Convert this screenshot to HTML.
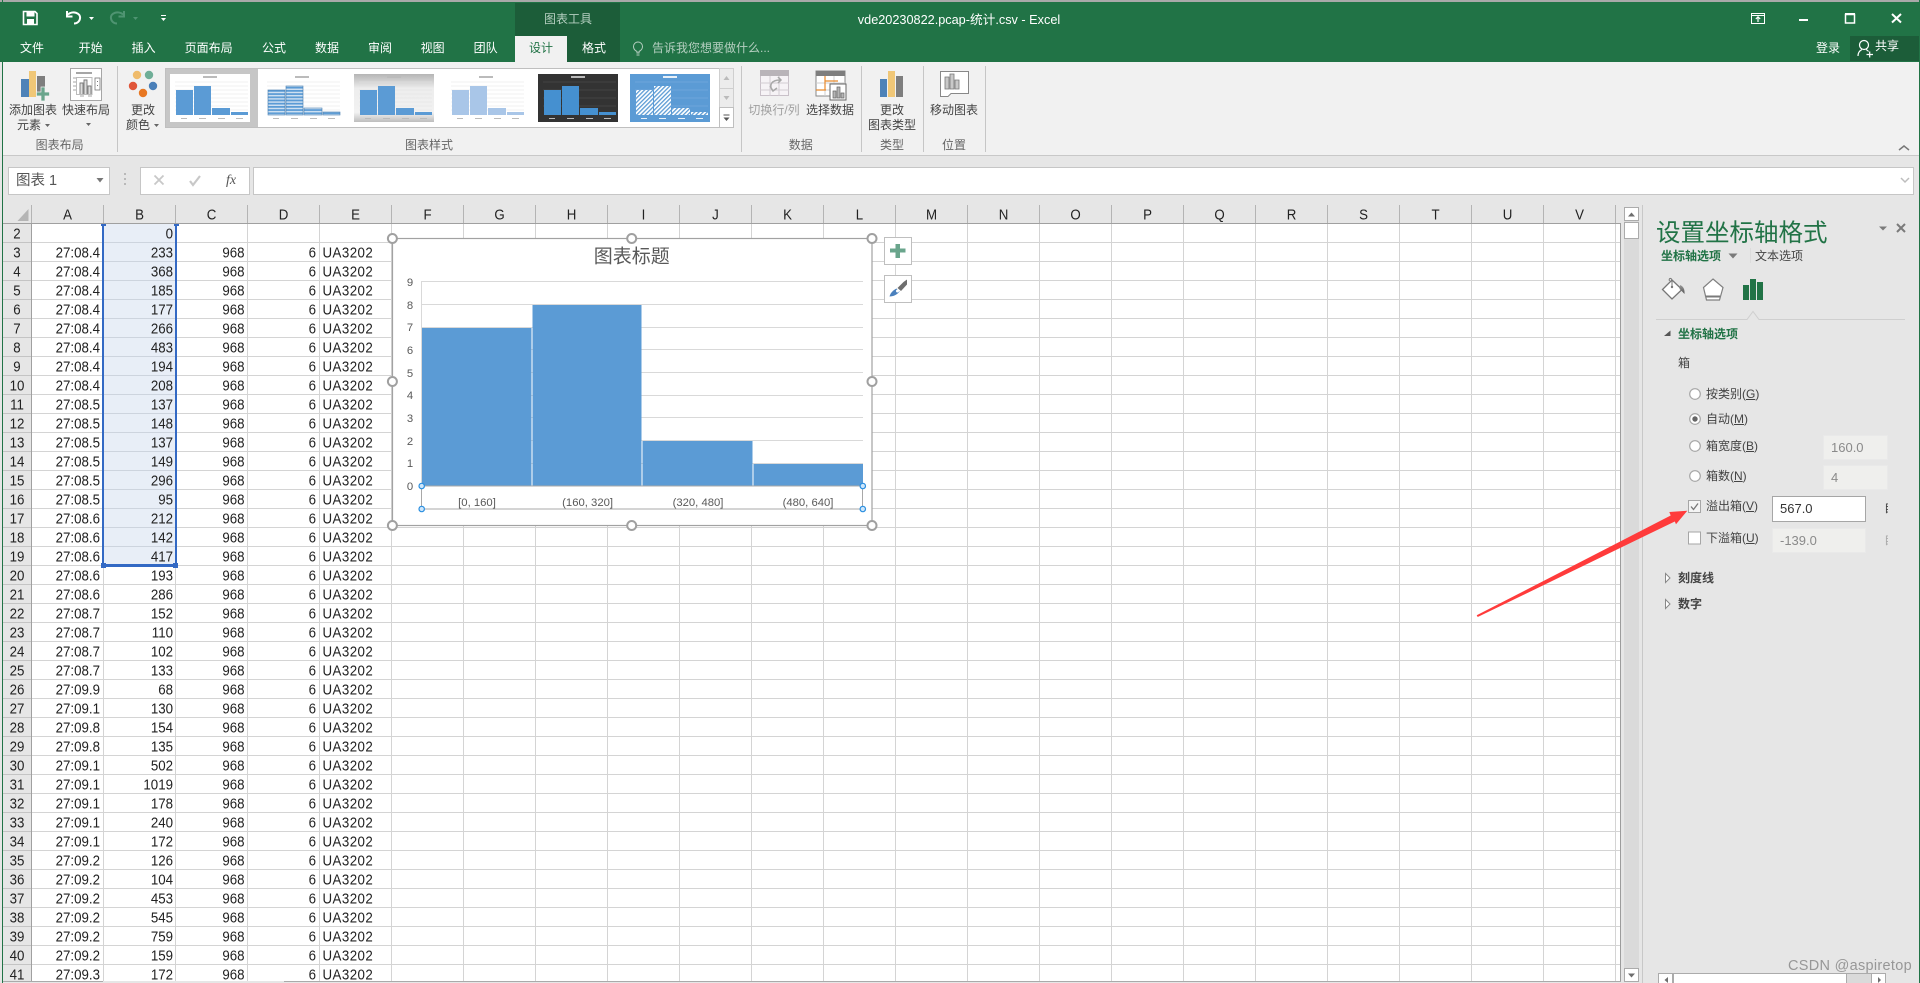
<!DOCTYPE html>
<html lang="zh-CN"><head><meta charset="utf-8"><title>vde20230822.pcap-统计.csv - Excel</title>
<style>
html,body{margin:0;padding:0;width:1920px;height:983px;overflow:hidden;background:#e6e6e6}
body{position:relative;font-family:"Liberation Sans","Noto Sans CJK SC","WenQuanYi Zen Hei",sans-serif;font-size:12px;color:#444}
div,span{box-sizing:border-box}
.a{position:absolute}
.t{position:absolute;white-space:nowrap;line-height:16px}
.c{transform:translateX(-50%)}
.w{color:#fff}
.g{color:#666}
.hd{position:absolute;top:205px;height:18px;width:72px;text-align:center;line-height:19px;font-size:13.3px;color:#222;border-right:1px solid #b4b4b4;transform-origin:top}
.hd span{display:inline-block;transform:scaleY(1.12)}
#rows{position:absolute;left:0;top:224px;width:400px;height:757px;overflow:hidden;font-size:13.3px;color:#222}
.r{position:relative;height:19px;line-height:18px}
.r span{position:absolute;top:1px;transform:scaleY(1.12);white-space:nowrap}
.r .h{left:3px;width:28px;text-align:center}
.r .x1{left:32px;width:68px;text-align:right}
.r .x2{left:104px;width:69px;text-align:right}
.r .x3{left:176px;width:68.5px;text-align:right}
.r .x4{left:248px;width:68px;text-align:right}
.r .x5{left:322.5px;letter-spacing:.45px}
.in{position:absolute;background:#efefed;border:1px solid #e9e9e9;color:#8a8a8a;font-size:13px;line-height:23px;padding-left:7px}
.u{text-decoration:underline;text-underline-offset:1px}
</style></head><body>

<!-- window frame -->
<div class="a" style="left:0;top:0;width:1920px;height:2px;background:#a9a9a9"></div>
<div class="a" style="left:2px;top:0;width:1px;height:983px;background:#217346"></div>
<div class="a" style="left:1919px;top:0;width:1px;height:983px;background:#217346"></div>

<!-- title bar -->
<div class="a" style="left:0;top:2px;width:1920px;height:60px;background:#217346"></div>
<div class="a" style="left:515px;top:3px;width:105px;height:59px;background:#1c5d39"></div>
<div class="a" style="left:515px;top:36px;width:52px;height:26px;background:#f1f1f1"></div>
<div class="a" style="left:1850px;top:36px;width:69px;height:25px;background:#1c5d39"></div>

<span class="t c" style="left:568px;top:11px;color:#b5cfc0">图表工具</span>
<span class="t c w" style="left:959px;top:12px;font-size:12.7px">vde20230822.pcap-统计.csv - Excel</span>

<span class="t c w" style="left:32px;top:40px">文件</span>
<span class="t c w" style="left:90.6px;top:40px">开始</span>
<span class="t c w" style="left:143.7px;top:40px">插入</span>
<span class="t c w" style="left:208.6px;top:40px">页面布局</span>
<span class="t c w" style="left:274px;top:40px">公式</span>
<span class="t c w" style="left:327px;top:40px">数据</span>
<span class="t c w" style="left:380px;top:40px">审阅</span>
<span class="t c w" style="left:432.7px;top:40px">视图</span>
<span class="t c w" style="left:485.7px;top:40px">团队</span>
<span class="t c" style="left:541px;top:40px;color:#217346">设计</span>
<span class="t c w" style="left:594px;top:40px">格式</span>
<span class="t" style="left:652px;top:40px;color:#b5cfc0">告诉我您想要做什么...</span>
<span class="t c w" style="left:1828px;top:40px">登录</span>
<span class="t w" style="left:1875px;top:38px">共享</span>

<!-- ribbon -->
<div class="a" style="left:3px;top:62px;width:1916px;height:94px;background:#f1f1f1;border-bottom:1px solid #c8c8c8"></div>

<span class="t c" style="left:33px;top:102px">添加图表</span>
<span class="t c" style="left:29px;top:117px">元素</span>
<span class="t c" style="left:86px;top:102px">快速布局</span>
<span class="t c" style="left:143px;top:102px">更改</span>
<span class="t c" style="left:138px;top:117px">颜色</span>
<span class="t c" style="left:774px;top:102px;color:#a0a0a0">切换行/列</span>
<span class="t c" style="left:830px;top:102px">选择数据</span>
<span class="t c" style="left:892px;top:102px">更改</span>
<span class="t c" style="left:892px;top:117px">图表类型</span>
<span class="t c" style="left:954px;top:102px">移动图表</span>
<span class="t c g" style="left:59.6px;top:137px">图表布局</span>
<span class="t c g" style="left:429px;top:137px">图表样式</span>
<span class="t c g" style="left:800.8px;top:137px">数据</span>
<span class="t c g" style="left:892px;top:137px">类型</span>
<span class="t c g" style="left:954px;top:137px">位置</span>

<!-- formula bar -->
<div class="a" style="left:8px;top:167px;width:102px;height:28px;background:#fff;border:1px solid #c6c6c6"></div>
<div class="a" style="left:140px;top:167px;width:110px;height:28px;background:#fff;border:1px solid #c6c6c6"></div>
<div class="a" style="left:253px;top:167px;width:1661px;height:28px;background:#fff;border:1px solid #c6c6c6"></div>
<span class="t" style="left:16px;top:173px;font-size:14.5px;color:#555">图表 1</span>
<span class="t c" style="left:231px;top:173px;font-family:'Liberation Serif',serif;font-style:italic;font-size:14px;color:#555">fx</span>

<!-- column headers -->
<div class="a" style="left:3px;top:205px;width:1617px;height:19px;background:#e6e6e6;border-bottom:1px solid #a0a0a0"></div>
<div class="a" style="left:31px;top:205px;width:1px;height:18px;background:#b4b4b4"></div>
<div class="hd" style="left:32px"><span>A</span></div><div class="hd" style="left:104px"><span>B</span></div><div class="hd" style="left:176px"><span>C</span></div><div class="hd" style="left:248px"><span>D</span></div><div class="hd" style="left:320px"><span>E</span></div><div class="hd" style="left:392px"><span>F</span></div><div class="hd" style="left:464px"><span>G</span></div><div class="hd" style="left:536px"><span>H</span></div><div class="hd" style="left:608px"><span>I</span></div><div class="hd" style="left:680px"><span>J</span></div><div class="hd" style="left:752px"><span>K</span></div><div class="hd" style="left:824px"><span>L</span></div><div class="hd" style="left:896px"><span>M</span></div><div class="hd" style="left:968px"><span>N</span></div><div class="hd" style="left:1040px"><span>O</span></div><div class="hd" style="left:1112px"><span>P</span></div><div class="hd" style="left:1184px"><span>Q</span></div><div class="hd" style="left:1256px"><span>R</span></div><div class="hd" style="left:1328px"><span>S</span></div><div class="hd" style="left:1400px"><span>T</span></div><div class="hd" style="left:1472px"><span>U</span></div><div class="hd" style="left:1544px"><span>V</span></div>

<!-- row header + grid -->
<div class="a" style="left:3px;top:224px;width:29px;height:757px;background-color:#e6e6e6;background-image:linear-gradient(to bottom,transparent 18px,#c4c4c4 18px);background-size:100% 19px;border-right:1px solid #a0a0a0"></div>
<div class="a" style="left:32px;top:224px;width:1588px;height:757px;background-color:#fff;background-image:linear-gradient(to right,transparent 71px,#d4d4d4 71px),linear-gradient(to bottom,transparent 18px,#d4d4d4 18px);background-size:72px 19px"></div>
<div class="a" style="left:1620px;top:223px;width:1px;height:758px;background:#9c9c9c"></div>
<!-- selection -->
<div class="a" style="left:104px;top:224px;width:71px;height:341px;background-color:#e8eef7;background-image:linear-gradient(to bottom,transparent 18px,#cdd4de 18px);background-size:100% 19px"></div>
<div class="a" style="left:102px;top:226px;width:2px;height:339px;background:#3369c4"></div>
<div class="a" style="left:175px;top:226px;width:2px;height:339px;background:#3369c4"></div>
<div class="a" style="left:102px;top:564px;width:75px;height:3px;background:#3369c4"></div>
<div class="a" style="left:101px;top:224px;width:5px;height:2px;background:#3369c4"></div>
<div class="a" style="left:174px;top:224px;width:5px;height:2px;background:#3369c4"></div>
<div class="a" style="left:101px;top:563px;width:5px;height:5px;background:#3369c4"></div>
<div class="a" style="left:173px;top:563px;width:5px;height:5px;background:#3369c4"></div>

<div id="rows">
<div class="r"><span class="h">2</span><span class="x2">0</span></div>
<div class="r"><span class="h">3</span><span class="x1">27:08.4</span><span class="x2">233</span><span class="x3">968</span><span class="x4">6</span><span class="x5">UA3202</span></div>
<div class="r"><span class="h">4</span><span class="x1">27:08.4</span><span class="x2">368</span><span class="x3">968</span><span class="x4">6</span><span class="x5">UA3202</span></div>
<div class="r"><span class="h">5</span><span class="x1">27:08.4</span><span class="x2">185</span><span class="x3">968</span><span class="x4">6</span><span class="x5">UA3202</span></div>
<div class="r"><span class="h">6</span><span class="x1">27:08.4</span><span class="x2">177</span><span class="x3">968</span><span class="x4">6</span><span class="x5">UA3202</span></div>
<div class="r"><span class="h">7</span><span class="x1">27:08.4</span><span class="x2">266</span><span class="x3">968</span><span class="x4">6</span><span class="x5">UA3202</span></div>
<div class="r"><span class="h">8</span><span class="x1">27:08.4</span><span class="x2">483</span><span class="x3">968</span><span class="x4">6</span><span class="x5">UA3202</span></div>
<div class="r"><span class="h">9</span><span class="x1">27:08.4</span><span class="x2">194</span><span class="x3">968</span><span class="x4">6</span><span class="x5">UA3202</span></div>
<div class="r"><span class="h">10</span><span class="x1">27:08.4</span><span class="x2">208</span><span class="x3">968</span><span class="x4">6</span><span class="x5">UA3202</span></div>
<div class="r"><span class="h">11</span><span class="x1">27:08.5</span><span class="x2">137</span><span class="x3">968</span><span class="x4">6</span><span class="x5">UA3202</span></div>
<div class="r"><span class="h">12</span><span class="x1">27:08.5</span><span class="x2">148</span><span class="x3">968</span><span class="x4">6</span><span class="x5">UA3202</span></div>
<div class="r"><span class="h">13</span><span class="x1">27:08.5</span><span class="x2">137</span><span class="x3">968</span><span class="x4">6</span><span class="x5">UA3202</span></div>
<div class="r"><span class="h">14</span><span class="x1">27:08.5</span><span class="x2">149</span><span class="x3">968</span><span class="x4">6</span><span class="x5">UA3202</span></div>
<div class="r"><span class="h">15</span><span class="x1">27:08.5</span><span class="x2">296</span><span class="x3">968</span><span class="x4">6</span><span class="x5">UA3202</span></div>
<div class="r"><span class="h">16</span><span class="x1">27:08.5</span><span class="x2">95</span><span class="x3">968</span><span class="x4">6</span><span class="x5">UA3202</span></div>
<div class="r"><span class="h">17</span><span class="x1">27:08.6</span><span class="x2">212</span><span class="x3">968</span><span class="x4">6</span><span class="x5">UA3202</span></div>
<div class="r"><span class="h">18</span><span class="x1">27:08.6</span><span class="x2">142</span><span class="x3">968</span><span class="x4">6</span><span class="x5">UA3202</span></div>
<div class="r"><span class="h">19</span><span class="x1">27:08.6</span><span class="x2">417</span><span class="x3">968</span><span class="x4">6</span><span class="x5">UA3202</span></div>
<div class="r"><span class="h">20</span><span class="x1">27:08.6</span><span class="x2">193</span><span class="x3">968</span><span class="x4">6</span><span class="x5">UA3202</span></div>
<div class="r"><span class="h">21</span><span class="x1">27:08.6</span><span class="x2">286</span><span class="x3">968</span><span class="x4">6</span><span class="x5">UA3202</span></div>
<div class="r"><span class="h">22</span><span class="x1">27:08.7</span><span class="x2">152</span><span class="x3">968</span><span class="x4">6</span><span class="x5">UA3202</span></div>
<div class="r"><span class="h">23</span><span class="x1">27:08.7</span><span class="x2">110</span><span class="x3">968</span><span class="x4">6</span><span class="x5">UA3202</span></div>
<div class="r"><span class="h">24</span><span class="x1">27:08.7</span><span class="x2">102</span><span class="x3">968</span><span class="x4">6</span><span class="x5">UA3202</span></div>
<div class="r"><span class="h">25</span><span class="x1">27:08.7</span><span class="x2">133</span><span class="x3">968</span><span class="x4">6</span><span class="x5">UA3202</span></div>
<div class="r"><span class="h">26</span><span class="x1">27:09.9</span><span class="x2">68</span><span class="x3">968</span><span class="x4">6</span><span class="x5">UA3202</span></div>
<div class="r"><span class="h">27</span><span class="x1">27:09.1</span><span class="x2">130</span><span class="x3">968</span><span class="x4">6</span><span class="x5">UA3202</span></div>
<div class="r"><span class="h">28</span><span class="x1">27:09.8</span><span class="x2">154</span><span class="x3">968</span><span class="x4">6</span><span class="x5">UA3202</span></div>
<div class="r"><span class="h">29</span><span class="x1">27:09.8</span><span class="x2">135</span><span class="x3">968</span><span class="x4">6</span><span class="x5">UA3202</span></div>
<div class="r"><span class="h">30</span><span class="x1">27:09.1</span><span class="x2">502</span><span class="x3">968</span><span class="x4">6</span><span class="x5">UA3202</span></div>
<div class="r"><span class="h">31</span><span class="x1">27:09.1</span><span class="x2">1019</span><span class="x3">968</span><span class="x4">6</span><span class="x5">UA3202</span></div>
<div class="r"><span class="h">32</span><span class="x1">27:09.1</span><span class="x2">178</span><span class="x3">968</span><span class="x4">6</span><span class="x5">UA3202</span></div>
<div class="r"><span class="h">33</span><span class="x1">27:09.1</span><span class="x2">240</span><span class="x3">968</span><span class="x4">6</span><span class="x5">UA3202</span></div>
<div class="r"><span class="h">34</span><span class="x1">27:09.1</span><span class="x2">172</span><span class="x3">968</span><span class="x4">6</span><span class="x5">UA3202</span></div>
<div class="r"><span class="h">35</span><span class="x1">27:09.2</span><span class="x2">126</span><span class="x3">968</span><span class="x4">6</span><span class="x5">UA3202</span></div>
<div class="r"><span class="h">36</span><span class="x1">27:09.2</span><span class="x2">104</span><span class="x3">968</span><span class="x4">6</span><span class="x5">UA3202</span></div>
<div class="r"><span class="h">37</span><span class="x1">27:09.2</span><span class="x2">453</span><span class="x3">968</span><span class="x4">6</span><span class="x5">UA3202</span></div>
<div class="r"><span class="h">38</span><span class="x1">27:09.2</span><span class="x2">545</span><span class="x3">968</span><span class="x4">6</span><span class="x5">UA3202</span></div>
<div class="r"><span class="h">39</span><span class="x1">27:09.2</span><span class="x2">759</span><span class="x3">968</span><span class="x4">6</span><span class="x5">UA3202</span></div>
<div class="r"><span class="h">40</span><span class="x1">27:09.2</span><span class="x2">159</span><span class="x3">968</span><span class="x4">6</span><span class="x5">UA3202</span></div>
<div class="r"><span class="h">41</span><span class="x1">27:09.3</span><span class="x2">172</span><span class="x3">968</span><span class="x4">6</span><span class="x5">UA3202</span></div>
</div>
<div class="a" style="left:3px;top:981px;width:100px;height:2px;background:#e6e6e6;border-top:1px solid #aaa"></div>
<div class="a" style="left:284px;top:981px;width:1337px;height:2px;background:#e6e6e6;border-top:1px solid #aaa"></div>

<!-- scrollbar -->
<div class="a" style="left:1624px;top:207px;width:15px;height:775px;background:#dadada"></div>
<div class="a" style="left:1624px;top:207px;width:15px;height:14px;background:#fff;border:1px solid #ababab"></div>
<div class="a" style="left:1624px;top:222px;width:15px;height:17px;background:#fff;border:1px solid #ababab"></div>
<div class="a" style="left:1624px;top:968px;width:15px;height:14px;background:#fff;border:1px solid #ababab"></div>
<div class="a" style="left:1642px;top:205px;width:1px;height:778px;background:#c8c8c8"></div>

<!-- task pane -->
<span class="t" style="left:1656px;top:220px;font-size:24.5px;line-height:28px;color:#217346">设置坐标轴格式</span>
<span class="t" style="left:1661px;top:248px;font-weight:bold;color:#217346">坐标轴选项</span>
<span class="t" style="left:1755px;top:248px">文本选项</span>
<span class="t" style="left:1678px;top:326px;font-weight:bold;color:#217346">坐标轴选项</span>
<span class="t" style="left:1678px;top:355px">箱</span>
<span class="t" style="left:1706px;top:386px">按类别(<span class="u">G</span>)</span>
<span class="t" style="left:1706px;top:411px">自动(<span class="u">M</span>)</span>
<span class="t" style="left:1706px;top:438px">箱宽度(<span class="u">B</span>)</span>
<span class="t" style="left:1706px;top:468px">箱数(<span class="u">N</span>)</span>
<span class="t" style="left:1706px;top:498px">溢出箱(<span class="u">V</span>)</span>
<span class="t" style="left:1706px;top:530px">下溢箱(<span class="u">U</span>)</span>
<div class="in" style="left:1823px;top:435px;width:65px;height:25px">160.0</div>
<div class="in" style="left:1823px;top:465px;width:65px;height:25px">4</div>
<div class="in" style="left:1772px;top:496px;width:94px;height:26px;background:#fff;border:1px solid #a6a6a6;color:#333">567.0</div>
<div class="in" style="left:1772px;top:528px;width:94px;height:25px">-139.0</div>
<div class="a" style="left:1884px;top:500px;width:4px;height:16px;overflow:hidden;line-height:16px">自动</div>
<div class="a" style="left:1884px;top:532px;width:4px;height:16px;overflow:hidden;line-height:16px;color:#aaa">自动</div>
<span class="t" style="left:1678px;top:570px;font-weight:bold">刻度线</span>
<span class="t" style="left:1678px;top:596px;font-weight:bold">数字</span>
<span class="t" style="left:1788px;top:958px;font-size:14.5px;color:#979797;letter-spacing:.3px">CSDN @aspiretop</span>

<!-- pane bottom scrollbar -->
<div class="a" style="left:1658px;top:973px;width:228px;height:10px;background:#dadada;border-top:1px solid #ababab"></div>
<div class="a" style="left:1658px;top:973px;width:15px;height:10px;background:#fff;border:1px solid #ababab;border-bottom:0"></div>
<div class="a" style="left:1673px;top:973px;width:174px;height:10px;background:#fff;border:1px solid #ababab;border-bottom:0"></div>
<div class="a" style="left:1871px;top:973px;width:15px;height:10px;background:#fff;border:1px solid #ababab;border-bottom:0"></div>

<!-- all graphics overlay -->
<svg class="a" style="left:0;top:0" width="1920" height="983" viewBox="0 0 1920 983" xmlns="http://www.w3.org/2000/svg">
<defs>
<g id="bb"><rect x="6" y="16" width="17" height="25"/><rect x="24" y="12" width="17" height="29"/><rect x="42" y="34" width="18" height="7"/><rect x="61" y="38" width="17" height="3"/></g>
<pattern id="st" width="4" height="3.2" patternUnits="userSpaceOnUse"><rect width="4" height="1.8" fill="#5b9bd5"/><rect y="1.8" width="4" height="1.4" fill="#cfe0f1"/></pattern>
<pattern id="ha" width="3" height="3" patternUnits="userSpaceOnUse" patternTransform="rotate(45)"><rect width="3" height="3" fill="#fff"/><rect width="1.3" height="3" fill="#5b9bd5"/></pattern>
<linearGradient id="gr" x1="0" y1="0" x2="0" y2="1"><stop offset="0" stop-color="#b5b5b5"/><stop offset=".3" stop-color="#ededed"/><stop offset=".8" stop-color="#f2f2f2"/><stop offset="1" stop-color="#bdbdbd"/></linearGradient>
<linearGradient id="bk" x1="0" y1="0" x2="0" y2="1"><stop offset="0" stop-color="#999"/><stop offset="1" stop-color="#555"/></linearGradient>
<g id="gl" stroke="#e2e2e2" stroke-width=".6"><path d="M5 8H78M5 12H78M5 16H78M5 20H78M5 24H78M5 28H78M5 32H78M5 36H78"/></g>
<g id="lb" fill="#bbb"><rect x="11" y="44" width="6" height="1"/><rect x="29" y="44" width="7" height="1"/><rect x="48" y="44" width="7" height="1"/><rect x="66" y="44" width="7" height="1"/><rect x="33" y="2" width="14" height="2"/></g>
</defs>

<!-- QAT -->
<g fill="none" stroke="#fff">
<path d="M23.5 11.5H35L37 13.5V24.5H23.5Z" stroke-width="1.6"/>
<rect x="26.5" y="12" width="8" height="4.5" fill="#fff" stroke="none"/>
<rect x="27" y="19" width="7" height="5.5" fill="#fff" stroke="none"/>
<path d="M68 14.5C72 10.5 81 12.5 80 18.5C79.6 21.5 77 23.5 74 23.5" stroke-width="2"/>
<path d="M67 11V16.5H72.5" stroke-width="2"/>
</g>
<path d="M89 17h5l-2.5 3z" fill="#fff"/>
<g fill="none" stroke="#4f9472" stroke-width="2"><path d="M123 14.5C119 10.5 110 12.5 111 18.5C111.4 21.5 114 23.5 117 23.5"/><path d="M124 11V16.5H118.5"/></g>
<path d="M133 17h5l-2.5 3z" fill="#4f9472"/>
<path d="M161 15h5v1h-5zM161 18h5l-2.5 3z" fill="#fff"/>

<!-- window controls -->
<g fill="none" stroke="#fff" stroke-width="1">
<rect x="1751.5" y="13.5" width="13" height="10"/><path d="M1751.5 15.5h13"/><path d="M1758 22v-5M1755.8 19l2.2-2.2 2.2 2.2" stroke-width="1.2"/>
<rect x="1845.5" y="14.5" width="9" height="8.5" stroke-width="1.5"/><path d="M1845 14h10" stroke-width="2"/>
<path d="M1892 14L1901 22.5M1901 14L1892 22.5" stroke-width="2"/>
</g>
<rect x="1799" y="19" width="9" height="2" fill="#fff"/>
<g fill="none" stroke="#fff" stroke-width="1.2"><circle cx="1864" cy="45" r="4.5"/><path d="M1858 56C1858 52 1860 50.5 1862 49.5M1866 49.5C1867 50 1868 50.5 1868.5 51.5M1866.5 54.5H1873M1869.7 51.5V57.5"/></g>
<!-- tell me bulb -->
<g fill="none" stroke="#b5cfc0" stroke-width="1"><path d="M637 53v-1.5c-2-1-3.5-3-3.5-5a4.5 4.5 0 0 1 9 0c0 2-1.5 4-3.5 5V53zM636.5 55h3"/></g>

<!-- ribbon icons: add chart element -->
<rect x="21" y="79" width="8" height="18" fill="#4d82b8"/><rect x="29" y="71" width="7" height="26" fill="#f0c777"/><rect x="37" y="76" width="8" height="20" fill="#7e7e7e"/>
<path d="M41 87h4v5h4.500v4H45v5h-4v-5H36.500v-4H41z" fill="#6aa58c" stroke="#f1f1f1" stroke-width=".7"/>
<!-- quick layout -->
<rect x="70.500" y="68.500" width="31" height="32" fill="#fff" stroke="#a6a6a6"/>
<rect x="76" y="72" width="16" height="2" fill="#a6a6a6"/>
<path d="M73 78h4M73 82h4M73 86h4M73 90h4M80 96h4M88 96h4" stroke="#a6a6a6" fill="none"/>
<path d="M76.500 77.500H92V94.500H76.500Z" fill="#fff" stroke="#bbb"/>
<path d="M80 94V83h3V94M84 94V80h3V94M88 94V86h3V94" fill="#ddd" stroke="#777" stroke-width=".9"/>
<rect x="95" y="78" width="5" height="12" fill="#fff" stroke="#777" stroke-width=".8"/><path d="M97.500 81v1M97.500 85v1" stroke="#777"/>
<path d="M45 124h5l-2.500 3zM86 123h5l-2.500 3zM154 124h5l-2.500 3z" fill="#666"/>
<!-- change colours -->
<circle cx="137" cy="75" r="4.200" fill="#efbb6b"/><circle cx="149" cy="75" r="4.200" fill="#6fae97"/><circle cx="133" cy="86" r="4.200" fill="#e0563a"/><circle cx="153" cy="86" r="4.200" fill="#4a7fb8"/><circle cx="143" cy="93" r="4.200" fill="#e87722"/>
<!-- separators -->
<path d="M117.500 66V152M741.500 66V152M861.500 66V152M923.500 66V152M985.500 66V152" stroke="#c6c6c6"/>

<!-- gallery -->
<rect x="165.500" y="68.500" width="568" height="59" fill="#fff" stroke="#bfbfbf"/>
<rect x="166" y="69" width="92" height="58" fill="#c6c6c6"/>
<g transform="translate(170 74)"><rect width="80" height="48" fill="#fff"/><use href="#gl"/><use href="#lb"/><use href="#bb" fill="#5b9bd5"/></g>
<g transform="translate(262 74)"><rect width="80" height="48" fill="#fff"/><use href="#gl"/><use href="#lb"/><use href="#bb" fill="url(#st)" stroke="#4a7fb0" stroke-width=".6"/></g>
<g transform="translate(354 74)"><rect width="80" height="48" fill="url(#gr)"/><use href="#gl"/><use href="#lb"/><use href="#bb" fill="#5b9bd5"/></g>
<g transform="translate(446 74)"><rect width="80" height="48" fill="#fff"/><use href="#gl"/><use href="#lb"/><use href="#bb" fill="#a9c6e8"/></g>
<g transform="translate(538 74)"><rect width="80" height="48" fill="#333"/><path d="M5 8H78M5 16H78M5 24H78M5 32H78" stroke="#555" stroke-width=".6"/><use href="#lb"/><use href="#bb" fill="#4590d0"/></g>
<g transform="translate(630 74)"><rect width="80" height="48" fill="#5b9bd5"/><path d="M5 8H78M5 16H78M5 24H78M5 32H78" stroke="#7fb2e0" stroke-width=".6"/><g fill="#e8f0f8"><rect x="33" y="2" width="14" height="2"/><rect x="11" y="44" width="6" height="1"/><rect x="29" y="44" width="7" height="1"/><rect x="48" y="44" width="7" height="1"/><rect x="66" y="44" width="7" height="1"/></g><use href="#bb" fill="url(#ha)"/></g>
<rect x="719.500" y="68.500" width="14" height="20" fill="#ececec" stroke="#cfcfcf"/><rect x="719.500" y="88.500" width="14" height="19" fill="#ececec" stroke="#cfcfcf"/><rect x="719.500" y="107.500" width="14" height="20" fill="#fff" stroke="#bfbfbf"/>
<path d="M723.500 80l3-4 3 4zM723.500 96l3 4 3-4z" fill="#bbb"/><path d="M723.500 114.500h6v1h-6zM723.500 117.500h6l-3 3.500z" fill="#555"/>

<!-- switch row/col -->
<rect x="760.500" y="70.500" width="28" height="25" fill="#f6f3f6" stroke="#c9c1c9"/><rect x="760" y="70" width="29" height="6" fill="#b9b4b9"/>
<path d="M770 76V96M779 76V96M760 83H789M760 90H789" stroke="#d3ccd3"/>
<path d="M773 91C768 85 772 80 780 80M770 86l3 5 4-3M778 77l3 3-3 3" fill="none" stroke="#a8a8a8" stroke-width="1.500"/>
<!-- select data -->
<rect x="816" y="71" width="29" height="25" fill="#fff" stroke="#888"/><rect x="816" y="71" width="29" height="5" fill="#7e7e7e"/>
<path d="M816 83H845M816 90H845M825 76V96M834 76V96" stroke="#cfcfcf"/>
<path d="M825 76V90M825 81H838M816 90H826" stroke="#e88a2c" stroke-width="1.200" fill="none"/>
<rect x="830" y="84" width="16" height="16" fill="#fff" stroke="#666"/><path d="M833 98V91h3V98zM837 98V87h3V98zM841 98V93h3V98z" fill="#b5b5b5" stroke="#666" stroke-width=".7"/>
<!-- change type -->
<rect x="880" y="79" width="7" height="18" fill="#4d82b8"/><rect x="888" y="71" width="7" height="26" fill="#f0c777"/><rect x="896" y="76" width="7" height="21" fill="#7e7e7e"/>
<!-- move chart -->
<path d="M940.500 71.500H968.500V93.500H951L948 96.500H940.500Z" fill="#fff" stroke="#888"/>
<path d="M945 89V77h4V89zM950 89V74h4V89zM955 89V80h4V89z" fill="#c9c9c9" stroke="#777" stroke-width=".8"/>
<path d="M1899 150l5-4 5 4" fill="none" stroke="#777" stroke-width="1.500"/>

<!-- formula bar icons -->
<path d="M96.500 178h7l-3.500 4.500z" fill="#777"/>
<path d="M125 173v2M125 178v2M125 183v2" stroke="#aaa" stroke-width="1.500"/>
<path d="M154.500 175.500l9 9M163.500 175.500l-9 9" stroke="#c8c8c8" stroke-width="1.800"/>
<path d="M190 181l3 4 7-9" stroke="#c8c8c8" stroke-width="2.200" fill="none"/>
<path d="M1901 178l4 4 4-4" fill="none" stroke="#bdbdbd" stroke-width="1.500"/>
<!-- corner triangle -->
<path d="M28.500 209V221H17.500Z" fill="#b5b5b5"/>

<!-- scrollbar arrows -->
<path d="M1628 216.500h7l-3.500-4zM1628 973.500h7l-3.500 4z" fill="#6e6e6e"/>
<path d="M1668 983v-6l-3.500 3z" fill="#6e6e6e"/><path d="M1878 977v6l3 -3z" fill="#6e6e6e"/>

<!-- chart -->
<rect x="392.500" y="238.500" width="479.500" height="287" fill="#fff" stroke="#a2a2a2" stroke-width="1.200"/>
<path d="M421.500 281.500H863M421.500 304.500H863M421.500 327.500H863M421.500 349.500H863M421.500 372.500H863M421.500 395.500H863M421.500 417.500H863M421.500 440.500H863M421.500 463.500H863M421.500 281V486" stroke="#d9d9d9" fill="none"/>
<rect x="422" y="328" width="109.500" height="158" fill="#5b9bd5"/><rect x="532.500" y="305" width="109" height="181" fill="#5b9bd5"/><rect x="642.500" y="441" width="110" height="45" fill="#5b9bd5"/><rect x="753.500" y="464" width="109.500" height="22" fill="#5b9bd5"/>
<path d="M421.500 486H862.500V509H421.500Z" fill="none" stroke="#a8a8a8"/>
<text x="631.700" y="262.500" text-anchor="middle" font-size="19" fill="#595959" font-family="'Liberation Sans','Noto Sans CJK SC',sans-serif">图表标题</text>
<g font-size="11.300" fill="#595959" text-anchor="middle" font-family="'Liberation Sans',sans-serif">
<text x="410" y="286">9</text><text x="410" y="309">8</text><text x="410" y="331">7</text><text x="410" y="354">6</text><text x="410" y="377">5</text><text x="410" y="399">4</text><text x="410" y="422">3</text><text x="410" y="445">2</text><text x="410" y="467">1</text><text x="410" y="490">0</text>
<text x="477" y="506">[0, 160]</text><text x="587.600" y="506">(160, 320]</text><text x="698" y="506">(320, 480]</text><text x="808" y="506">(480, 640]</text></g>
<g fill="#cfe6fa" stroke="#2a8fe0" stroke-width="1.200"><circle cx="421.700" cy="486" r="2.700"/><circle cx="862.800" cy="486" r="2.700"/><circle cx="421.700" cy="509" r="2.700"/><circle cx="862.800" cy="509" r="2.700"/></g>
<g fill="#fff" stroke="#a0a0a0" stroke-width="2"><circle cx="392.400" cy="238.500" r="4.500"/><circle cx="631.700" cy="238.500" r="4.500"/><circle cx="872" cy="238.500" r="4.500"/><circle cx="392.400" cy="381.500" r="4.500"/><circle cx="872" cy="381.500" r="4.500"/><circle cx="392.400" cy="525.500" r="4.500"/><circle cx="631.700" cy="525.500" r="4.500"/><circle cx="872" cy="525.500" r="4.500"/></g>
<rect x="884.500" y="237.500" width="27" height="27" fill="#fff" stroke="#bfbfbf"/><path d="M895.500 245h4.500v4.500h5.500v4h-5.500V259h-4.500v-5.500H890v-4h5.500z" fill="#6aa58c" transform="translate(0 -1)"/>
<rect x="884.500" y="275.500" width="27" height="27" fill="#fff" stroke="#bfbfbf"/><path d="M889.500 296.500c1-4 4-6.500 7-8l3 3c-2 3-6 5-10 5z" fill="#4a80bd"/><path d="M897.500 288l6-6 3.500-2.500v5l-6 6.500z" fill="#6e6e6e"/><circle cx="897.500" cy="291" r="1.500" fill="#fff"/>

<!-- pane icons -->
<path d="M1879 226.500h8l-4 4z" fill="#7a7a7a"/>
<path d="M1897 224l8 8M1905 224l-8 8" stroke="#7a7a7a" stroke-width="2"/>
<path d="M1728.500 253.500h9l-4.500 5z" fill="#7a7a7a"/>
<path d="M1750.500 248V263" stroke="#dcdcdc"/>
<!-- bucket -->
<path d="M1672 280L1682 289.500L1672 299L1662.500 289.500Z" fill="#fff" stroke="#777" stroke-width="1.300"/>
<path d="M1672 287V281C1672 277 1668 278 1669.500 281" fill="none" stroke="#777"/><circle cx="1672" cy="287" r="1.200" fill="#777"/>
<path d="M1680 285c3 1 5 4 4.500 9-1.500-1.500-2.500-3-5-5z" fill="url(#bk)"/>
<!-- pentagon -->
<path d="M1713 279L1723 287.500L1719.500 300H1706.500L1703.500 287.500Z" fill="#fff" stroke="#808080" stroke-width="1.200"/>
<rect x="1706" y="295.500" width="14" height="2" fill="#7a7a7a"/>
<!-- bars -->
<rect x="1743" y="285" width="6" height="15" fill="#217346"/><rect x="1750" y="279" width="6" height="21" fill="#217346"/><rect x="1757" y="282" width="6" height="18" fill="#217346"/>
<path d="M1656 319.500H1747L1753 311.500L1759 319.500H1905" fill="#e6e6e6" stroke="#cfcfcf"/>
<path d="M1664 336h6.500v-5.500z" fill="#555"/>
<!-- radios -->
<g fill="#fff" stroke="#a6a6a6" stroke-width="1.200"><circle cx="1695" cy="394" r="5.300"/><circle cx="1695" cy="419" r="5.300"/><circle cx="1695" cy="446" r="5.300"/><circle cx="1695" cy="476" r="5.300"/></g>
<circle cx="1695" cy="419" r="2.700" fill="#666"/>
<rect x="1688.500" y="500.500" width="12" height="12" fill="#f4f4f4" stroke="#a6a6a6"/><path d="M1691 506.500l2.500 3 4.500-6" fill="none" stroke="#777" stroke-width="1.300"/>
<rect x="1688.500" y="532" width="12" height="12" fill="#fff" stroke="#a6a6a6"/>
<path d="M1665.500 573.500v9l4.500-4.500z M1665.500 599.500v9l4.500-4.500z" fill="#fff" stroke="#888"/>

<!-- red arrow -->
<path d="M1476.700 615.300L1670.700 515.500L1669.300 512L1687.300 510.700L1676 524.300L1674.800 521.500L1477.700 617Z" fill="#ff3b3b"/>
</svg>
</body></html>
